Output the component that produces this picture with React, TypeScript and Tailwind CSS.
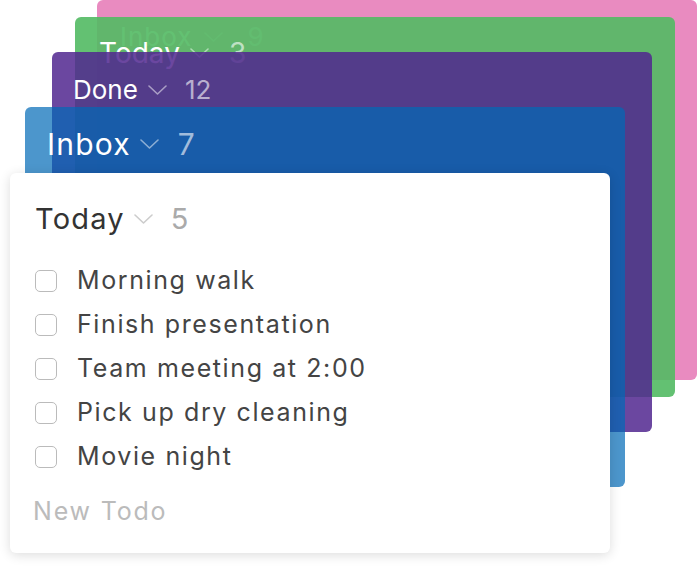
import React from 'react';

type Deck = {
  title: string;
  count: number;
  bg: string;
  pos: string;
  head: string;
  size: string;
  chev: string;
};

// back cards of the stack, farthest first
const decks: Deck[] = [
  { title: 'Inbox', count: 9, bg: 'bg-[#e98bc0]', pos: 'left-[97px] top-0', head: 'pt-[19px] pl-[23px] tracking-[1px]', size: 'text-[26px]', chev: 'ml-[12px] mr-[24px]' },
  { title: 'Today', count: 3, bg: 'bg-[#52ba63]/90', pos: 'left-[75px] top-[17px]', head: 'pt-[18px] pl-[24px]', size: 'text-[28px]', chev: 'ml-[10px] mr-[20px]' },
  { title: 'Done', count: 12, bg: 'bg-[#51278f]/85', pos: 'left-[52px] top-[52px]', head: 'pt-[20px] pl-[21px]', size: 'text-[26px]', chev: 'ml-[10px] mr-[18px]' },
  { title: 'Inbox', count: 7, bg: 'bg-[#0069b6]/70', pos: 'left-[25px] top-[107px]', head: 'pt-[19px] pl-[22px] tracking-[1.2px]', size: 'text-[30px]', chev: 'ml-[9px] mr-[19px]' },
];

const todos = ['Morning walk', 'Finish presentation', 'Team meeting at 2:00', 'Pick up dry cleaning', 'Movie night'];

function Chevron({ className }: { className: string }) {
  return (
    <svg width="19" height="10" viewBox="0 0 19 10" fill="none" className={className}>
      <path d="M1 1l8.5 8L18 1" stroke="currentColor" strokeWidth="1.6" strokeLinecap="round" strokeLinejoin="round" />
    </svg>
  );
}

export default function App() {
  return (
    <div className="relative w-[697px] h-[567px] overflow-hidden bg-white" style={{ fontFamily: 'Inter, "Open Sans", sans-serif' }}>
      {decks.map((d, i) => (
        <div key={i} className={`absolute ${d.pos} w-[600px] h-[380px] rounded-[6px] ${d.bg}`}>
          <div className={`flex items-baseline leading-[36px] ${d.head} ${d.size}`}>
            <span className="text-white">{d.title}</span>
            <Chevron className={`${d.chev} text-white/50 self-center`} />
            <span className="text-white/60">{d.count}</span>
          </div>
        </div>
      ))}

      <div className="absolute left-[10px] top-[173px] w-[600px] h-[380px] rounded-[6px] bg-white shadow-[0_2px_12px_rgba(0,0,0,0.14)]">
        <div className="flex items-baseline pt-[28px] pl-[25px] text-[29px] leading-[36px] tracking-[1.2px]">
          <span className="text-[#333]">Today</span>
          <Chevron className="ml-[9px] mr-[18px] text-[#ccc] self-center" />
          <span className="text-[#aaa]">5</span>
        </div>
        <ul className="mt-[22px] pl-[25px]">
          {todos.map((t) => (
            <li key={t} className="flex items-center h-[44px] gap-[20px]">
              <span className="w-[22px] h-[22px] rounded-[5px] border border-[#bbb] shrink-0" />
              <span className="text-[25px] text-[#444] tracking-[1.6px]">{t}</span>
            </li>
          ))}
        </ul>
        <div className="mt-[11px] pl-[23px] h-[44px] flex items-center text-[25px] text-[#bbb] tracking-[1.8px]">New Todo</div>
      </div>
    </div>
  );
}
